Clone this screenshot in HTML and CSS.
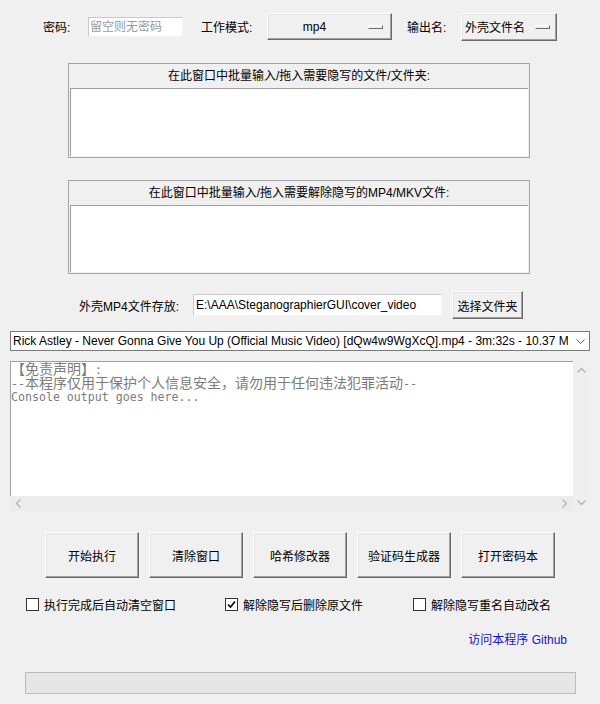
FILE: index.html
```html
<!DOCTYPE html>
<html lang="zh-CN">
<head>
  <meta charset="UTF-8" />
  <meta name="viewport" content="width=device-width, initial-scale=1.0"/>
  <title>SteganographierGUI</title>
  <link rel="stylesheet" href="styles.css">
</head>
<body>
  <div class="app">
    <!-- password / mode / output name -->
    <div class="top-row">
      <span class="lbl lbl-pwd">密码:</span>
      <input class="entry entry-pwd" type="text" placeholder="留空则无密码">
      <span class="lbl lbl-mode">工作模式:</span>
      <div class="option option-mode"><span class="option-text">mp4</span><span class="option-ind"></span></div>
      <span class="lbl lbl-out">输出名:</span>
      <div class="option option-out"><span class="option-text">外壳文件名</span><span class="option-ind"></span></div>
    </div>

    <div class="dropbox box-hide">
      <div class="dropbox-title">在此窗口中批量输入/拖入需要隐写的文件/文件夹:</div>
      <div class="dropbox-area"></div>
    </div>

    <div class="dropbox box-reveal">
      <div class="dropbox-title">在此窗口中批量输入/拖入需要解除隐写的MP4/MKV文件:</div>
      <div class="dropbox-area"></div>
    </div>

    <div class="path-row">
      <span class="lbl lbl-path">外壳MP4文件存放:</span>
      <input class="entry entry-path" type="text" value="E:\AAA\SteganographierGUI\cover_video">
      <button class="btn btn-small">选择文件夹</button>
    </div>

    <div class="combo">
      <span class="combo-text">Rick Astley - Never Gonna Give You Up (Official Music Video) [dQw4w9WgXcQ].mp4 - 3m:32s - 10.37 M</span>
      <svg class="combo-arrow" width="9" height="5" viewBox="0 0 9 5"><polyline points="0.5,0.5 4.5,4.5 8.5,0.5" fill="none" stroke="#606060" stroke-width="1"/></svg>
    </div>

    <!-- console output with scrollbars -->
    <div class="console">
      <div class="console-text">
        <div class="line"><span class="wide">【免责声明】</span>:</div>
        <div class="line">--<span class="wide">本程序仅用于保护个人信息安全，请勿用于任何违法犯罪活动</span>--</div>
        <div class="line">Console output goes here...</div>
      </div>
      <div class="vscroll">
        <svg width="9" height="5" viewBox="0 0 9 5"><polyline points="0.5,4.5 4.5,0.5 8.5,4.5" fill="none" stroke="#b4b4b4" stroke-width="1.4"/></svg>
        <svg width="9" height="5" viewBox="0 0 9 5"><polyline points="0.5,0.5 4.5,4.5 8.5,0.5" fill="none" stroke="#b4b4b4" stroke-width="1.4"/></svg>
      </div>
      <div class="hscroll">
        <svg width="5" height="9" viewBox="0 0 5 9"><polyline points="4.5,0.5 0.5,4.5 4.5,8.5" fill="none" stroke="#b4b4b4" stroke-width="1.4"/></svg>
        <svg width="5" height="9" viewBox="0 0 5 9"><polyline points="0.5,0.5 4.5,4.5 0.5,8.5" fill="none" stroke="#b4b4b4" stroke-width="1.4"/></svg>
      </div>
    </div>

    <div class="btn-row">
      <button class="btn">开始执行</button>
      <button class="btn">清除窗口</button>
      <button class="btn">哈希修改器</button>
      <button class="btn">验证码生成器</button>
      <button class="btn">打开密码本</button>
    </div>

    <div class="check-row">
      <label class="check check-1"><span class="box"></span>执行完成后自动清空窗口</label>
      <label class="check check-2"><span class="box"><svg width="11" height="11" viewBox="0 0 11 11"><polyline points="2,5.5 4.5,8 9,2.5" fill="none" stroke="#000" stroke-width="1.6"/></svg></span>解除隐写后删除原文件</label>
      <label class="check check-3"><span class="box"></span>解除隐写重名自动改名</label>
    </div>

    <div class="link-row"><a class="link" href="#">访问本程序 Github</a></div>

    <div class="progress"></div>
  </div>
</body>
</html>
```

FILE: styles.css
```css
body {
  margin: 0;
  background: #f0f0f0;
  font-family: 'Liberation Sans', 'Noto Sans CJK SC', sans-serif;
  font-size: 12px;
  color: #000;
}

.app {
  width: 600px;
  height: 704px;
}

.lbl {
  white-space: nowrap;
}

.entry {
  box-sizing: border-box;
  font: inherit;
  color: #000;
  background: #fff;
  border: 1px solid;
  border-color: #c9c9c9 #f4f4f4 #f4f4f4 #c9c9c9;
  padding: 0 1px;
  margin: 0;
  outline: none;
}

.entry::placeholder {
  color: #9a9a9a;
}

/* top row */
.top-row {
  display: flex;
  align-items: center;
  height: 53px;
  padding-left: 43px;
}

.lbl-pwd { width: 45px; }
.entry-pwd { width: 95px; height: 20px; }
.lbl-mode { width: 66px; margin-left: 18px; }
.lbl-out { width: 54px; margin-left: 15px; }

.option {
  box-sizing: border-box;
  display: flex;
  align-items: center;
  border: 1px solid;
  border-color: #fff #696969 #696969 #fff;
  box-shadow: inset -1px -1px #a0a0a0, inset 1px 1px #e3e3e3;
  padding: 0 6px 0 1px;
}

.option-mode { width: 125px; height: 27px; padding-right: 8px; }
.option-out { width: 96px; height: 28px; }

.option-text {
  flex: 1;
  text-align: center;
  white-space: nowrap;
}

.option-ind {
  box-sizing: border-box;
  width: 15px;
  height: 4px;
  margin-left: 8px;
  border: 1px solid;
  border-color: #fff #696969 #696969 #fff;
}

/* drop boxes */
.dropbox {
  box-sizing: border-box;
  width: 462px;
  margin-left: 68px;
  border: 1px solid #a5a5a5;
  padding: 1px;
}

.box-hide { margin-top: 10px; }
.box-reveal { margin-top: 22px; }

.dropbox-title {
  height: 23px;
  line-height: 23px;
  text-align: center;
}

.dropbox-area {
  background: #fff;
  border-top: 1px solid #a0a0a0;
  border-left: 1px solid #a0a0a0;
  height: 67px;
}

.box-reveal .dropbox-area { height: 66px; }

/* cover video path */
.path-row {
  display: flex;
  align-items: center;
  height: 28px;
  margin-top: 17px;
  padding-left: 79px;
}

.lbl-path { width: 114px; }
.entry-path { width: 249px; height: 22px; padding-left: 2px; }

.btn {
  box-sizing: border-box;
  font: inherit;
  color: #000;
  background: #f0f0f0;
  border: 1px solid;
  border-color: #fff #696969 #696969 #fff;
  box-shadow: inset -1px -1px #a0a0a0, inset 1px 1px #e3e3e3;
  padding: 0;
  margin: 0;
  cursor: pointer;
}

.btn-small {
  width: 71px;
  height: 28px;
  margin-left: 10px;
}

/* file combo */
.combo {
  box-sizing: border-box;
  display: flex;
  align-items: center;
  width: 580px;
  height: 20px;
  margin: 12px 0 0 10px;
  background: #fff;
  border: 1px solid #7a7a7a;
}

.combo-text {
  flex: 1;
  overflow: hidden;
  white-space: nowrap;
  padding-left: 2px;
}

.combo-arrow {
  margin: 0 4px 0 8px;
}

/* console */
.console {
  display: grid;
  grid-template-columns: 563px 17px;
  grid-template-rows: 135px 15px;
  margin: 10px 0 0 10px;
}

.console-text {
  background: #fff;
  border-top: 1px solid #a0a0a0;
  border-left: 1px solid #a0a0a0;
  font-family: 'DejaVu Sans Mono', 'Noto Sans CJK SC', monospace;
  font-size: 11.6px;
  color: #7c7c7c;
}

.line {
  height: 14px;
  line-height: 14px;
  white-space: nowrap;
}

.wide {
  font-family: 'Noto Sans CJK SC', sans-serif;
  font-size: 14px;
  line-height: 13px;
}

.vscroll {
  grid-row: 1 / span 2;
  grid-column: 2;
  display: flex;
  flex-direction: column;
  align-items: center;
  justify-content: space-between;
  padding: 7px 0 6px;
  background: #efefef;
}

.hscroll {
  grid-row: 2;
  grid-column: 1;
  display: flex;
  align-items: center;
  justify-content: space-between;
  padding: 0 6px 0 6px;
  background: #ececec;
}

/* action buttons */
.btn-row {
  display: flex;
  gap: 10px;
  margin-top: 21px;
  padding-left: 45px;
}

.btn-row .btn {
  width: 94px;
  height: 46px;
}

/* options */
.check-row {
  display: flex;
  align-items: center;
  height: 16px;
  margin-top: 18px;
  padding-left: 26px;
}

.check {
  display: flex;
  align-items: center;
  white-space: nowrap;
}

.check-1 { width: 199px; }
.check-2 { width: 188px; }

.box {
  box-sizing: border-box;
  display: flex;
  align-items: center;
  justify-content: center;
  width: 13px;
  height: 13px;
  margin-right: 5px;
  background: #fff;
  border: 1px solid #333;
}

.link-row {
  height: 16px;
  line-height: 16px;
  margin-top: 20px;
  padding-right: 33px;
  text-align: right;
}

.link {
  color: #1414d2;
  text-decoration: none;
}

.progress {
  box-sizing: border-box;
  width: 551px;
  height: 22px;
  margin: 24px 0 0 25px;
  background: #e6e6e6;
  border: 1px solid #bcbcbc;
}
```
